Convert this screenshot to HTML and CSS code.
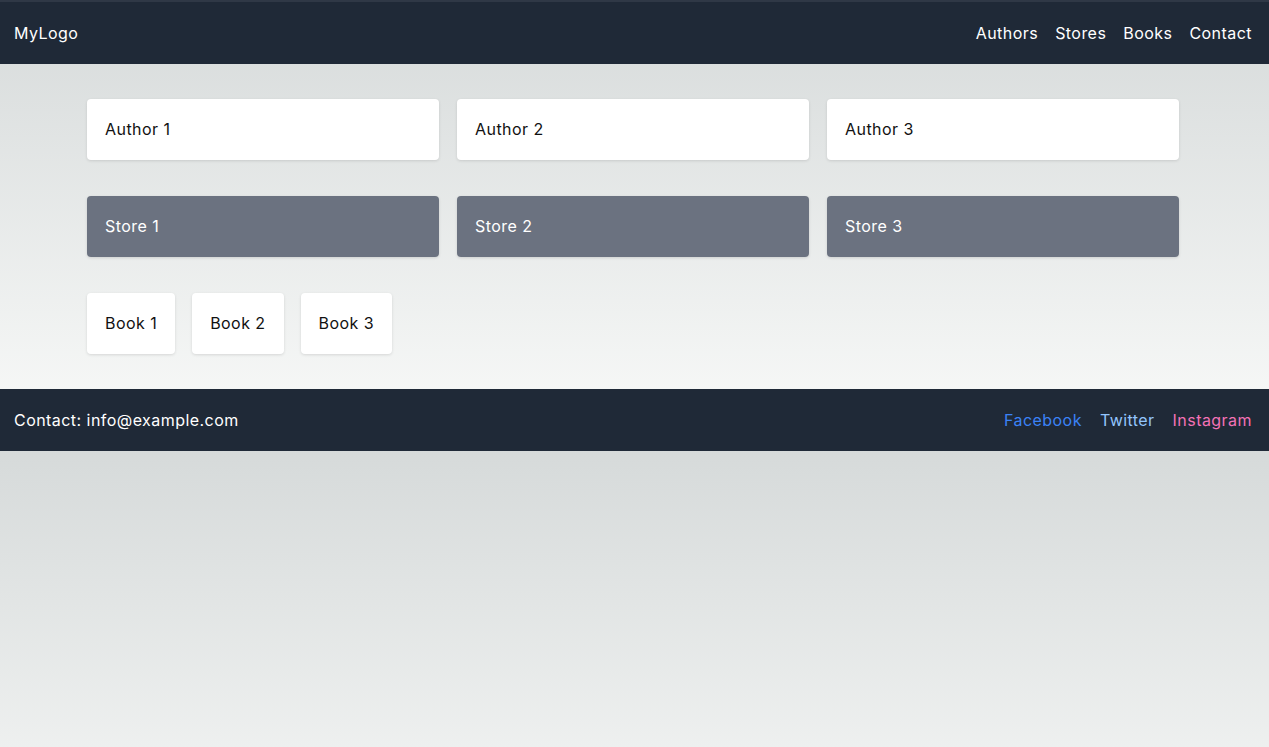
FILE: index.html
```html
<!DOCTYPE html>
<html lang="en">
<head>
<meta charset="utf-8">
<title>MyLogo</title>
<link rel="stylesheet" href="styles.css">
</head>
<body>
<header class="site-header">
  <div class="logo">MyLogo</div>
  <nav class="nav">
    <a href="#">Authors</a>
    <a href="#">Stores</a>
    <a href="#">Books</a>
    <a href="#">Contact</a>
  </nav>
</header>
<main class="main">
  <section class="row row-thirds">
    <div class="card">Author 1</div>
    <div class="card">Author 2</div>
    <div class="card">Author 3</div>
  </section>
  <section class="row row-thirds">
    <div class="card card-dark">Store 1</div>
    <div class="card card-dark">Store 2</div>
    <div class="card card-dark">Store 3</div>
  </section>
  <section class="row row-books">
    <div class="card">Book 1</div>
    <div class="card">Book 2</div>
    <div class="card">Book 3</div>
  </section>
</main>
<footer class="site-footer">
  <div class="contact">Contact: info@example.com</div>
  <div class="social">
    <a href="#" class="fb">Facebook</a>
    <a href="#" class="tw">Twitter</a>
    <a href="#" class="ig">Instagram</a>
  </div>
</footer>
</body>
</html>
```
FILE: styles.css
```css
body {
  margin: 0;
  font-family: Inter, "Liberation Sans", sans-serif;
  font-size: 16px;
  line-height: 24px;
  letter-spacing: 0.45px;
  color: #111;
  background: linear-gradient(to bottom, #d6dada, #fafbfa);
}
a { text-decoration: none; color: inherit; }

.site-header {
  height: 62px;
  border-top: 2px solid #2f3846;
  background: #1f2937;
  color: #fff;
  display: flex;
  align-items: center;
  justify-content: space-between;
  padding: 0 17px 0 14px;
}
.nav { display: flex; gap: 17px; }

.main {
  padding: 35px 90px 35px 87px;
  display: flex;
  flex-direction: column;
  gap: 36px;
}
.row { display: grid; gap: 18px; }
.row-thirds { grid-template-columns: repeat(3, 1fr); }
.row-books { display: flex; gap: 17px; }

.card {
  background: #fff;
  border-radius: 4px;
  padding: 18px 18px 19px;
  box-shadow: 0 1px 3px rgba(0,0,0,0.12);
}
.card-dark {
  background: #6b7280;
  color: #fff;
}

.site-footer {
  height: 62px;
  background: #1f2937;
  color: #fff;
  display: flex;
  align-items: center;
  justify-content: space-between;
  padding: 0 17px 0 14px;
}
.social { display: flex; gap: 18px; }
.fb { color: #3b82f6; }
.tw { color: #93c5fd; }
.ig { color: #f472b6; }
```
